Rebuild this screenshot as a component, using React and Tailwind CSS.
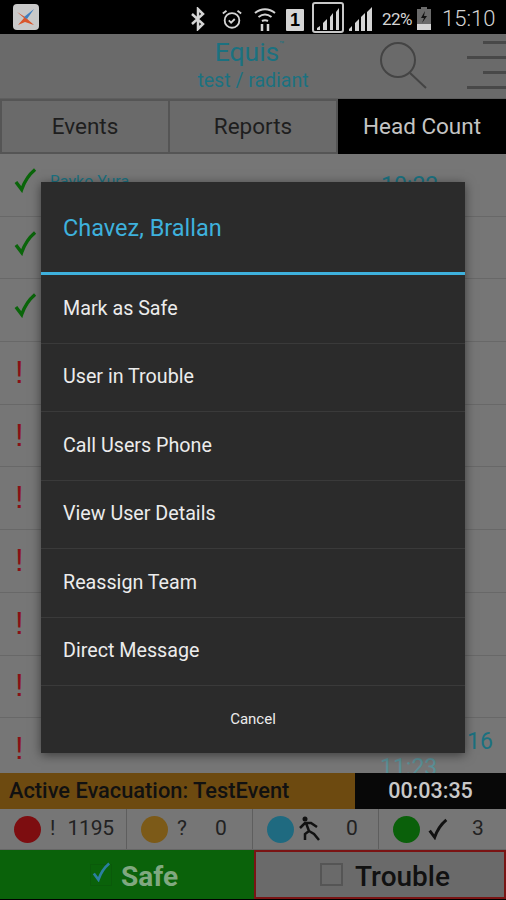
const rows = ['check', 'check', 'check', 'alert', 'alert', 'alert', 'alert', 'alert', 'alert', 'alert']
const menu = ['Mark as Safe', 'User in Trouble', 'Call Users Phone', 'View User Details', 'Reassign Team', 'Direct Message']

function Check({ className }) {
  return (
    <svg viewBox="0 0 24 26" className={className} fill="none" stroke="currentColor" strokeWidth="3.500">
      <path d="M2 15l6 8C11 14 16 7 22 2" />
    </svg>
  )
}

function StatusBar() {
  return (
    <div className="h-[34px] bg-black flex items-center relative shrink-0">
      <div className="absolute left-[13px] top-[4px] w-[26px] h-[26px] rounded-[4px] bg-[#c9c9c9] overflow-hidden">
        <svg viewBox="0 0 26 26" className="w-full h-full">
          <path d="M4 8l8 5 9 8-9-3-7 3 6-7z" fill="#d9552b" />
          <path d="M21 5l-7 10-3-2z" fill="#3f7fc0" />
        </svg>
      </div>
      <div className="absolute left-[189px] top-[6px] flex items-start text-[#d4d4d4]">
        <svg viewBox="0 0 18 24" className="w-[18px] h-[24px] mt-[1px]" fill="none" stroke="currentColor" strokeWidth="2.500">
          <path d="M3 7l11 10-5 5V2l5 5L3 17" />
        </svg>
        <svg viewBox="0 0 24 24" className="w-[22px] h-[24px] ml-[14px] mt-[1px]" fill="none" stroke="currentColor" strokeWidth="2">
          <circle cx="12" cy="13.500" r="8" />
          <path d="M8.500 13.500l2.500 2.500 4-4M2 6l4-3M22 6l-4-3" />
        </svg>
        <svg viewBox="0 0 24 26" className="w-[24px] h-[26px] ml-[10px]" fill="none" stroke="currentColor" strokeWidth="2">
          <path d="M2 7c6-5 14-5 20 0M5.500 11c4-3 9-3 13 0M9 15c2-1 4-1 6 0" />
          <path d="M9 18v7M15 18v7" strokeWidth="2.500" />
        </svg>
        <div className="w-[18px] h-[22px] ml-[9px] mt-[3px] bg-[#d4d4d4] rounded-[1px] text-black text-[18px] leading-[22px] font-bold text-center font-['Liberation_Sans',sans-serif]">1</div>
        <div className="w-[32px] h-[31px] ml-[8px] -mt-[4px] border-2 border-[#c8c8c8] rounded-[3px] flex items-end justify-center pb-[1px]">
          <svg viewBox="0 0 24 24" className="w-[24px] h-[24px]" fill="currentColor">
            <path d="M1 24v-2l3-2v4zM7 24v-7l4-4v11zM14 24V11l3-4v17zM20 24V6l3-4v22z" />
          </svg>
        </div>
        <svg viewBox="0 0 24 24" className="w-[24px] h-[24px] ml-[5px] mt-[1px]" fill="currentColor">
          <path d="M0 24v-2l3-3v5zM6 24v-8l4-4v12zM12 24V10l4-4v18zM18 24V5l5-5v24z" />
        </svg>
        <span className="ml-[9px] mt-[3px] text-[17px] leading-[20px] tracking-[-0.5px] font-['Roboto',sans-serif]">22%</span>
        <svg viewBox="0 0 16 24" className="w-[16px] h-[24px] ml-[4px]">
          <path d="M5 1h6v2h4v21H1V3h4z" fill="#6a6a6a" />
          <path d="M1 18h14v6H1z" fill="#d4d4d4" />
          <path d="M9 5l-4 7h3l-2 5 5-7H8z" fill="#111" />
        </svg>
        <span className="ml-[10px] mt-[1px] text-[22px] leading-[24px] font-['Roboto',sans-serif] font-light">15:10</span>
      </div>
    </div>
  )
}

function Header() {
  return (
    <div className="h-[64px] bg-[#6a6a6a] flex flex-col items-center relative shrink-0 font-['Roboto',sans-serif]">
      <div className="flex items-start mt-[3px] text-[#1b7180]">
        <span className="text-[26.500px] leading-[30px]">Equis</span>
        <span className="text-[8px] leading-[10px] mt-[3px] w-[12px]">™</span>
      </div>
      <div className="text-[19.500px] leading-[22px] mt-[3px] text-[#1b7180]">test / radiant</div>
      <svg viewBox="0 0 50 50" className="absolute left-[377px] top-[6px] w-[50px] h-[50px] text-[#444]" fill="none" stroke="currentColor" strokeWidth="2">
        <circle cx="21" cy="20" r="17" />
        <path d="M33 33l16 15" />
      </svg>
      <div className="absolute left-[467px] top-[6px] w-[39px] h-[50px] flex flex-col justify-between items-end py-[1px]">
        <div className="w-[23px] h-[3px] bg-[#484848]" />
        <div className="w-[39px] h-[3px] bg-[#484848]" />
        <div className="w-[23px] h-[3px] bg-[#484848]" />
        <div className="w-[39px] h-[3px] bg-[#484848]" />
      </div>
    </div>
  )
}

function Tabs() {
  return (
    <div className="h-[56px] bg-[#5e5e5e] flex items-stretch shrink-0 text-[22.500px] font-['Roboto',sans-serif] pt-[1px]">
      <div className="w-[170px] bg-[#6a6a6a] border-2 border-[#555] flex items-center justify-center text-[#1e1e1e]">Events</div>
      <div className="w-[168px] bg-[#6a6a6a] border-y-2 border-r-2 border-[#555] flex items-center justify-center text-[#1e1e1e]">Reports</div>
      <div className="flex-1 bg-[#000] flex items-center justify-center text-[#c4c4c4]">Head Count</div>
    </div>
  )
}

function List() {
  return (
    <div className="h-[619px] bg-[#767676] overflow-hidden shrink-0 relative font-['Roboto',sans-serif]">
      {rows.map((r, i) => (
        <div key={i} className="h-[62.700px] border-b border-[#686868] flex items-center pl-[14px]">
          {r === 'check' ? (
            <Check className="w-[23px] h-[26px] -mt-[10px] text-[#0a650a]" />
          ) : (
            <span className="w-[8px] ml-[1px] text-[#8a1014] text-[31px] leading-[30px] font-['Liberation_Sans',sans-serif]">!</span>
          )}
        </div>
      ))}
      <span className="absolute left-[50px] top-[16px] text-[16px] text-[#1b7180]">Rayko Yura</span>
      <span className="absolute left-[381px] top-[19px] text-[23px] leading-[26px] text-[#1b7180]">10:22</span>
      <span className="absolute left-[467px] top-[575px] text-[23px] leading-[26px] text-[#1b7180]">16</span>
      <span className="absolute left-[380px] top-[601px] text-[23px] leading-[26px] text-[#5a9097]">11:23</span>
    </div>
  )
}

function Footer() {
  return (
    <div className="font-['Roboto',sans-serif] shrink-0">
      <div className="h-[36px] flex">
        <div className="w-[355px] bg-[#6d4a10] flex items-center pl-[9px] text-[21.800px] font-medium text-[#111]">Active Evacuation: TestEvent</div>
        <div className="flex-1 bg-[#080808] flex items-center justify-center text-[21.500px] font-medium text-[#c8c8c8]">00:03:35</div>
      </div>
      <div className="h-[41px] flex bg-[#767676] text-[21px] text-[#222] border-b border-[#666]">
        <div className="w-[127px] border-r border-[#5e5e5e] flex items-center pl-[14px]">
          <div className="w-[27px] h-[27px] rounded-full bg-[#7d0d10]" />
          <span className="ml-[9px]">!</span>
          <span className="ml-[12px] tracking-[-0.2px]">1195</span>
        </div>
        <div className="w-[126px] border-r border-[#5e5e5e] flex items-center pl-[14px]">
          <div className="w-[27px] h-[27px] rounded-full bg-[#7c5a18]" />
          <span className="ml-[9px]">?</span>
          <span className="ml-[28px]">0</span>
        </div>
        <div className="w-[126px] border-r border-[#5e5e5e] flex items-center pl-[14px]">
          <div className="w-[27px] h-[27px] rounded-full bg-[#1f6a80]" />
          <svg viewBox="0 0 22 26" className="w-[22px] h-[26px] ml-[5px]" fill="none" stroke="#111" strokeWidth="2.500">
            <circle cx="6" cy="3" r="2.500" fill="#111" stroke="none" />
            <path d="M1 12l5-5h6l6 4M7 7l3 8-4 3v6M10 15l5 3 5 6" />
          </svg>
          <span className="ml-[25px]">0</span>
        </div>
        <div className="flex-1 flex items-center pl-[14px]">
          <div className="w-[27px] h-[27px] rounded-full bg-[#0a600a]" />
          <Check className="w-[20px] h-[22px] ml-[8px] text-[#111]" />
          <span className="ml-[24px]">3</span>
        </div>
      </div>
      <div className="h-[49px] flex text-[28px] font-medium">
        <div className="w-[254px] bg-[#0a620a] flex items-center pl-[90px] text-[#80a880]">
          <div className="w-[22px] h-[22px] border border-[#0a5a0a] mr-[9px] relative">
            <Check className="absolute left-0 -top-[3px] w-[21px] h-[20px] text-[#2b7fa0]" />
          </div>
          <span className="mt-[5px] font-bold">Safe</span>
        </div>
        <div className="flex-1 bg-[#6a6a6a] border-2 border-[#7a1414] flex items-center pl-[64px] text-[#111]">
          <div className="w-[23px] h-[23px] border-2 border-[#555] mr-[12px]" />
          <span className="mt-[5px]">Trouble</span>
        </div>
      </div>
    </div>
  )
}

function Dialog() {
  return (
    <div className="absolute left-[41px] top-[182px] w-[424px] h-[571px] bg-[#2b2b2b] shadow-[0_2px_10px_rgba(0,0,0,0.5)] flex flex-col font-['Roboto',sans-serif]">
      <div className="h-[93px] flex items-center pl-[22px] pt-[3px] border-b-[3px] border-[#3eb1dd] text-[23.500px] text-[#3eb1dd] shrink-0">Chavez, Brallan</div>
      {menu.map((m) => (
        <div key={m} className="h-[68.500px] flex items-center pl-[22px] border-b border-[#3a3a3a] text-[19.700px] text-[#ececec] shrink-0">{m}</div>
      ))}
      <div className="flex-1 flex items-center justify-center text-[15px] text-[#ececec]">Cancel</div>
    </div>
  )
}

export default function App() {
  return (
    <div className="w-[506px] h-[900px] relative overflow-hidden flex flex-col bg-black">
      <StatusBar />
      <Header />
      <Tabs />
      <List />
      <Footer />
      <Dialog />
    </div>
  )
}
